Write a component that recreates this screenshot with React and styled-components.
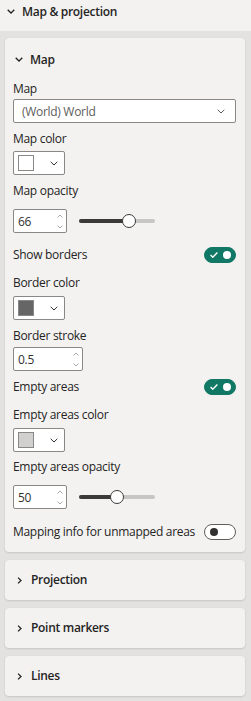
import React from 'react';
import styled, { createGlobalStyle } from 'styled-components';

const FONT = '"Segoe UI", "Open Sans", "Noto Sans", sans-serif';
const TEXT = '#252423';
const GREEN = '#117865';

const GlobalStyle = createGlobalStyle`
  html, body {
    margin: 0;
    padding: 0;
    background: #e4e2e0;
  }
  body {
    font-family: ${FONT};
    color: ${TEXT};
    letter-spacing: -0.3px;
    -webkit-font-smoothing: antialiased;
  }
`;

const Pane = styled.div`
  width: 251px;
  min-height: 701px;
  background: #e4e2e0;
  box-sizing: border-box;
`;

const PaneHeader = styled.div`
  height: 31px;
  box-sizing: border-box;
  background: #f3f2f1;
  display: flex;
  align-items: flex-start;
  padding: 4px 0 0 7px;
  gap: 7px;
  font-size: 12px;
  font-weight: 600;
  line-height: 15px;
  color: ${TEXT};

  svg {
    margin-top: 5px;
  }
`;

const CardList = styled.div`
  display: flex;
  flex-direction: column;
  gap: 8px;
  padding: 7px 6px 6px 5px;
`;

const Card = styled.div`
  background: #f3f2f1;
  border-radius: 4px;
  box-shadow: 0 1px 2px rgba(0, 0, 0, 0.12), 0 0 1px rgba(0, 0, 0, 0.08);
`;

const CardHeader = styled.div`
  height: ${(props) => (props.$open ? 43 : 40)}px;
  display: flex;
  align-items: center;
  gap: ${(props) => (props.$open ? 7 : 9)}px;
  padding-left: ${(props) => (props.$open ? 10 : 12)}px;
  font-size: 12px;
  font-weight: 600;
  line-height: 16px;
  color: ${TEXT};
`;

const CardBody = styled.div`
  padding: 0 9px 12px 8px;
  display: flex;
  flex-direction: column;
`;

const Field = styled.div`
  display: flex;
  flex-direction: column;
  gap: ${(props) => props.$gap}px;
  margin-top: ${(props) => props.$mt || 0}px;
`;

const Label = styled.div`
  font-size: 12px;
  line-height: 16px;
  white-space: nowrap;
  color: ${TEXT};
`;

const ToggleRow = styled.div`
  display: flex;
  align-items: center;
  justify-content: space-between;
  height: 16px;
  margin-top: ${(props) => props.$mt}px;
`;

const Dropdown = styled.div`
  height: 24px;
  box-sizing: border-box;
  border: 1px solid #8a8886;
  border-radius: 2px;
  background: #ffffff;
  display: flex;
  align-items: center;
  justify-content: space-between;
  padding: 0 10px 0 8px;
  font-size: 12px;
  color: #605e5c;
`;

const ColorButton = styled.div`
  width: 52px;
  height: 24px;
  box-sizing: border-box;
  border: 1px solid #8a8886;
  border-radius: 2px;
  background: #ffffff;
  display: flex;
  align-items: center;
  justify-content: space-between;
  padding: 0 6px 0 4px;
`;

const Swatch = styled.div`
  width: 16px;
  height: 16px;
  box-sizing: border-box;
  border: 1px solid #8a8886;
  background: ${(props) => props.$color};
`;

const SliderRow = styled.div`
  display: flex;
  align-items: center;
  gap: 12px;
`;

const NumberBox = styled.div`
  width: ${(props) => props.$width}px;
  height: 24px;
  box-sizing: border-box;
  border: 1px solid #8a8886;
  border-radius: 2px;
  background: #ffffff;
  display: flex;
  align-items: center;
  justify-content: space-between;
  padding: 0 3px 0 4px;
  font-size: 12px;
  color: #323130;
`;

const Spinner = styled.div`
  display: flex;
  flex-direction: column;
  gap: 7px;
`;

const Track = styled.div`
  position: relative;
  width: 76px;
  height: 4px;
  border-radius: 2px;
  background: #c8c6c4;
`;

const TrackFill = styled.div`
  height: 100%;
  border-radius: 2px;
  background: #3b3a39;
`;

const Thumb = styled.div`
  position: absolute;
  top: 50%;
  width: 14px;
  height: 14px;
  box-sizing: border-box;
  border-radius: 50%;
  border: 1.5px solid #3b3a39;
  background: #ffffff;
  transform: translate(-50%, -50%);
`;

const Toggle = styled.div`
  width: 32px;
  height: 16px;
  box-sizing: border-box;
  border-radius: 8px;
  border: 1px solid ${(props) => (props.$on ? GREEN : '#605e5c')};
  background: ${(props) => (props.$on ? GREEN : '#ffffff')};
  display: flex;
  align-items: center;
  justify-content: ${(props) => (props.$on ? 'space-between' : 'flex-start')};
  padding: 0 4px 0 5px;
`;

const Knob = styled.div`
  width: 8px;
  height: 8px;
  border-radius: 50%;
  background: ${(props) => (props.$on ? '#ffffff' : '#323130')};
`;

const ChevronDown = ({ color = TEXT, width = 8, stroke = 1.3 }) => (
  <svg width={width} height={5} viewBox="0 0 8 5" fill="none">
    <polyline points="0.7,0.8 4,4 7.3,0.8" stroke={color} strokeWidth={stroke} />
  </svg>
);

const ChevronRight = () => (
  <svg width={5} height={7} viewBox="0 0 5 7" fill="none">
    <polyline points="1,0.6 4,3.5 1,6.4" stroke={TEXT} strokeWidth={1.3} />
  </svg>
);

const SpinArrows = () => (
  <Spinner>
    <svg width={6} height={4} viewBox="0 0 6 4" fill="none">
      <polyline points="0.5,3.5 3,1 5.5,3.5" stroke="#a19f9d" strokeWidth={0.9} />
    </svg>
    <svg width={6} height={4} viewBox="0 0 6 4" fill="none">
      <polyline points="0.5,0.5 3,3 5.5,0.5" stroke="#a19f9d" strokeWidth={0.9} />
    </svg>
  </Spinner>
);

const Switch = ({ on }) => (
  <Toggle $on={on}>
    {on && (
      <svg width={8} height={6} viewBox="0 0 8 6" fill="none">
        <polyline points="0.6,3 2.8,5.2 7.4,0.6" stroke="#ffffff" strokeWidth={1.4} />
      </svg>
    )}
    <Knob $on={on} />
  </Toggle>
);

const ColorPicker = ({ color }) => (
  <ColorButton>
    <Swatch $color={color} />
    <ChevronDown width={8} stroke={1} color="#323130" />
  </ColorButton>
);

const Slider = ({ value }) => (
  <SliderRow>
    <NumberBox $width={54}>
      {value}
      <SpinArrows />
    </NumberBox>
    <Track>
      <TrackFill style={{ width: `${value}%` }} />
      <Thumb style={{ left: `${value}%` }} />
    </Track>
  </SliderRow>
);

const CollapsedCard = ({ title }) => (
  <Card>
    <CardHeader>
      <ChevronRight />
      {title}
    </CardHeader>
  </Card>
);

export default function App() {
  return (
    <Pane>
      <GlobalStyle />
      <PaneHeader>
        <ChevronDown />
        Map &amp; projection
      </PaneHeader>
      <CardList>
        <Card>
          <CardHeader $open>
            <ChevronDown />
            Map
          </CardHeader>
          <CardBody>
            <Field $gap={2}>
              <Label>Map</Label>
              <Dropdown>
                (World) World
                <ChevronDown width={8} stroke={1} color="#605e5c" />
              </Dropdown>
            </Field>
            <Field $gap={4} $mt={8}>
              <Label>Map color</Label>
              <ColorPicker color="#ffffff" />
            </Field>
            <Field $gap={10} $mt={8}>
              <Label>Map opacity</Label>
              <Slider value={66} />
            </Field>
            <ToggleRow $mt={14}>
              <Label>Show borders</Label>
              <Switch on />
            </ToggleRow>
            <Field $gap={5} $mt={12}>
              <Label>Border color</Label>
              <ColorPicker color="#666666" />
            </Field>
            <Field $gap={3} $mt={8}>
              <Label>Border stroke</Label>
              <NumberBox $width={70}>
                0.5
                <SpinArrows />
              </NumberBox>
            </Field>
            <ToggleRow $mt={8}>
              <Label>Empty areas</Label>
              <Switch on />
            </ToggleRow>
            <Field $gap={5} $mt={12}>
              <Label>Empty areas color</Label>
              <ColorPicker color="#d2d0ce" />
            </Field>
            <Field $gap={10} $mt={7}>
              <Label>Empty areas opacity</Label>
              <Slider value={50} />
            </Field>
            <ToggleRow $mt={15}>
              <Label>Mapping info for unmapped areas</Label>
              <Switch on={false} />
            </ToggleRow>
          </CardBody>
        </Card>
        <CollapsedCard title="Projection" />
        <CollapsedCard title="Point markers" />
        <CollapsedCard title="Lines" />
      </CardList>
    </Pane>
  );
}
